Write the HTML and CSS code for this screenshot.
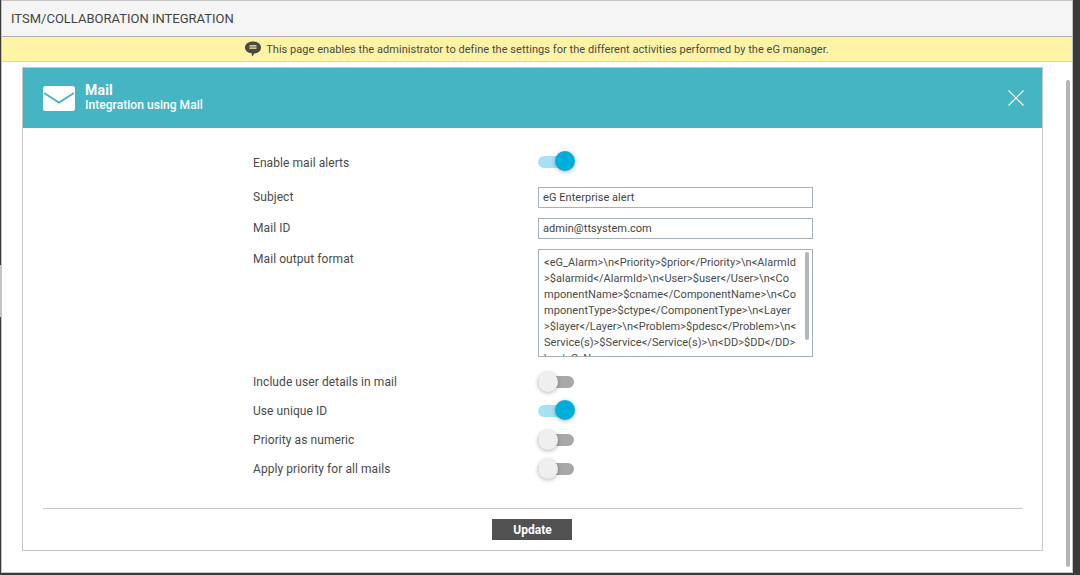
FILE: index.html
```html
<!DOCTYPE html>
<html lang="en">
<head>
<meta charset="utf-8">
<title>ITSM/Collaboration Integration</title>
<link rel="stylesheet" href="styles.css">
</head>
<body>
<main class="page">
  <span class="page-edge"></span>
  <header class="title-bar">ITSM/COLLABORATION INTEGRATION</header>
  <div class="notice">
    <svg class="notice-icon" viewBox="0 0 16 16" aria-hidden="true">
      <path d="M8 .5c4.400 0 8 2.500 8 6s-3.200 5.800-6.600 5.900L7.600 15c-.3.400-.7.200-.7-.2l-.3-2.500C3 11.900 0 9.800 0 6.500 0 3 3.600.5 8 .5z" fill="#4a4a42"/>
      <path d="M4.500 4.800h7M4.500 7.200h7" stroke="#fff3a5" stroke-width="1.300"/>
    </svg>
    <span>This page enables the administrator to define the settings for the different activities performed by the eG manager.</span>
  </div>
  <section class="panel">
    <div class="panel-head">
      <svg class="mail-icon" viewBox="0 0 32 25" aria-hidden="true">
        <rect width="32" height="25" rx="2.500" fill="#fff"/>
        <path d="M1 7l15 9.500L31 7" fill="none" stroke="#45b5c4" stroke-width="2"/>
      </svg>
      <div class="panel-titles">
        <h1>Mail</h1>
        <p>Integration using Mail</p>
      </div>
      <svg class="close-icon" viewBox="0 0 16 16" aria-hidden="true">
        <path d="M.5.500l15 15M15.500.500l-15 15" stroke="#fff" stroke-width="1.200" fill="none"/>
      </svg>
    </div>
    <form class="form">
      <div class="row row-toggle-first">
        <label>Enable mail alerts</label>
        <span class="toggle on"></span>
      </div>
      <div class="row row-input">
        <label>Subject</label>
        <div class="field">eG Enterprise alert</div>
      </div>
      <div class="row row-input">
        <label>Mail ID</label>
        <div class="field">admin@ttsystem.com</div>
      </div>
      <div class="row row-area">
        <label>Mail output format</label>
        <div class="area">
          <div class="area-text">&lt;eG_Alarm&gt;\n&lt;Priority&gt;$prior&lt;/Priority&gt;\n&lt;AlarmId<br>&gt;$alarmid&lt;/AlarmId&gt;\n&lt;User&gt;$user&lt;/User&gt;\n&lt;Co<br>mponentName&gt;$cname&lt;/ComponentName&gt;\n&lt;Co<br>mponentType&gt;$ctype&lt;/ComponentType&gt;\n&lt;Layer<br>&gt;$layer&lt;/Layer&gt;\n&lt;Problem&gt;$pdesc&lt;/Problem&gt;\n&lt;<br>Service(s)&gt;$Service&lt;/Service(s)&gt;\n&lt;DD&gt;$DD&lt;/DD&gt;<br>\n&lt;/eG_N</div>
          <span class="area-thumb"></span>
        </div>
      </div>
      <div class="row row-toggle">
        <label>Include user details in mail</label>
        <span class="toggle"></span>
      </div>
      <div class="row row-toggle">
        <label>Use unique ID</label>
        <span class="toggle on"></span>
      </div>
      <div class="row row-toggle">
        <label>Priority as numeric</label>
        <span class="toggle"></span>
      </div>
      <div class="row row-toggle">
        <label>Apply priority for all mails</label>
        <span class="toggle"></span>
      </div>
      <div class="actions">
        <button type="button" class="update">Update</button>
      </div>
    </form>
  </section>
  <span class="page-scroll"></span>
</main>
</body>
</html>
```

FILE: styles.css
```css
html, body {
  margin: 0;
  height: 100%;
  background: #3a3a3a;
  overflow: hidden;
}
body {
  font-family: Roboto, "Liberation Sans", sans-serif;
  color: #444;
}
.page {
  position: relative;
  box-sizing: border-box;
  width: 1072px;
  height: 573px;
  margin-left: 1px;
  background: #fff;
  border: 1px solid #c4c4c4;
}
.page-edge {
  position: absolute;
  top: 264px;
  left: -2px;
  width: 1px;
  height: 52px;
  background: #c4c4c4;
}
.title-bar {
  box-sizing: border-box;
  height: 36px;
  padding: 0 9px;
  background: #f5f5f5;
  border-bottom: 1px solid #aeaeae;
  font-size: 13px;
  line-height: 35px;
  color: #444;
}
.notice {
  box-sizing: border-box;
  height: 25px;
  display: flex;
  align-items: center;
  justify-content: center;
  gap: 5px;
  background: #fff3a5;
  border-bottom: 1px solid #e2d58c;
  font-size: 11px;
  letter-spacing: .045px;
  color: #4a4a42;
}
.notice-icon {
  width: 16px;
  height: 16px;
}
.panel {
  box-sizing: border-box;
  width: 1021px;
  height: 484px;
  margin: 5px 0 0 20px;
  border: 1px solid #c6c6c6;
}
.panel-head {
  height: 60px;
  display: flex;
  align-items: center;
  padding: 0 18px 0 20px;
  background: #45b5c4;
  color: #fff;
}
.mail-icon {
  width: 32px;
  height: 25px;
  margin-right: 10px;
}
.panel-titles {
  flex: 1;
}
.panel-titles h1 {
  margin: 0;
  font-size: 14px;
  line-height: 15px;
  letter-spacing: .2px;
  font-weight: 700;
}
.panel-titles p {
  margin: 0;
  font-size: 12px;
  line-height: 15px;
  letter-spacing: .05px;
  font-weight: 500;
}
.close-icon {
  width: 16px;
  height: 16px;
}
.form {
  padding-top: 21px;
}
.row {
  display: grid;
  grid-template-columns: 285px 275px;
  margin-left: 230px;
  font-size: 12px;
  letter-spacing: .07px;
  color: #4a4a4a;
}
.row label {
  line-height: 20px;
}
.row-toggle-first {
  height: 26px;
  align-items: center;
  margin-bottom: 12px;
}
.row-toggle-first label {
  margin-top: 1px;
}
.row-input {
  height: 21px;
  margin-bottom: 10px;
}
.row-area {
  height: 108px;
  margin-bottom: 10px;
}
.row-toggle {
  height: 29px;
  align-items: center;
}
.field {
  box-sizing: border-box;
  height: 21px;
  border: 1px solid #a5b0bd;
  padding: 0 4px;
  font-size: 11px;
  letter-spacing: .05px;
  line-height: 19px;
  color: #444;
}
.area {
  position: relative;
  box-sizing: border-box;
  height: 108px;
  border: 1px solid #a5b0bd;
  overflow: hidden;
}
.area-text {
  padding: 5px 5px 0;
  font-size: 11px;
  letter-spacing: .05px;
  line-height: 16px;
  color: #4a4a4a;
  white-space: nowrap;
}
.area-thumb {
  position: absolute;
  top: 2px;
  right: 3px;
  width: 4px;
  height: 88px;
  border-radius: 2px;
  background: #b5b5b5;
}
.toggle {
  position: relative;
  display: block;
  box-sizing: border-box;
  width: 36px;
  height: 12px;
  border-radius: 6px;
  background: #a9a7a7;
}
.toggle::after {
  content: "";
  position: absolute;
  top: -4px;
  left: 0;
  width: 20px;
  height: 20px;
  border-radius: 50%;
  background: #efefef;
  box-shadow: 0 1px 4px rgba(0, 0, 0, .3);
}
.toggle.on {
  background: #a6e2f3;
}
.toggle.on::after {
  left: 17px;
  top: -5px;
  background: #00aedb;
}
.actions {
  margin: 25px 20px 0;
  padding-top: 10px;
  border-top: 1px solid #c6c6c6;
  display: flex;
  justify-content: center;
}
.update {
  width: 80px;
  height: 21px;
  margin-left: -2px;
  padding: 0 0 0 2px;
  border: 0;
  background: #525252;
  color: #fff;
  font-family: Roboto, "Liberation Sans", sans-serif;
  font-size: 12px;
  font-weight: 700;
}
.page-scroll {
  position: absolute;
  top: 79px;
  left: 1064px;
  width: 4px;
  height: 487px;
  border-radius: 2px;
  background: #b5b5b5;
}
```
